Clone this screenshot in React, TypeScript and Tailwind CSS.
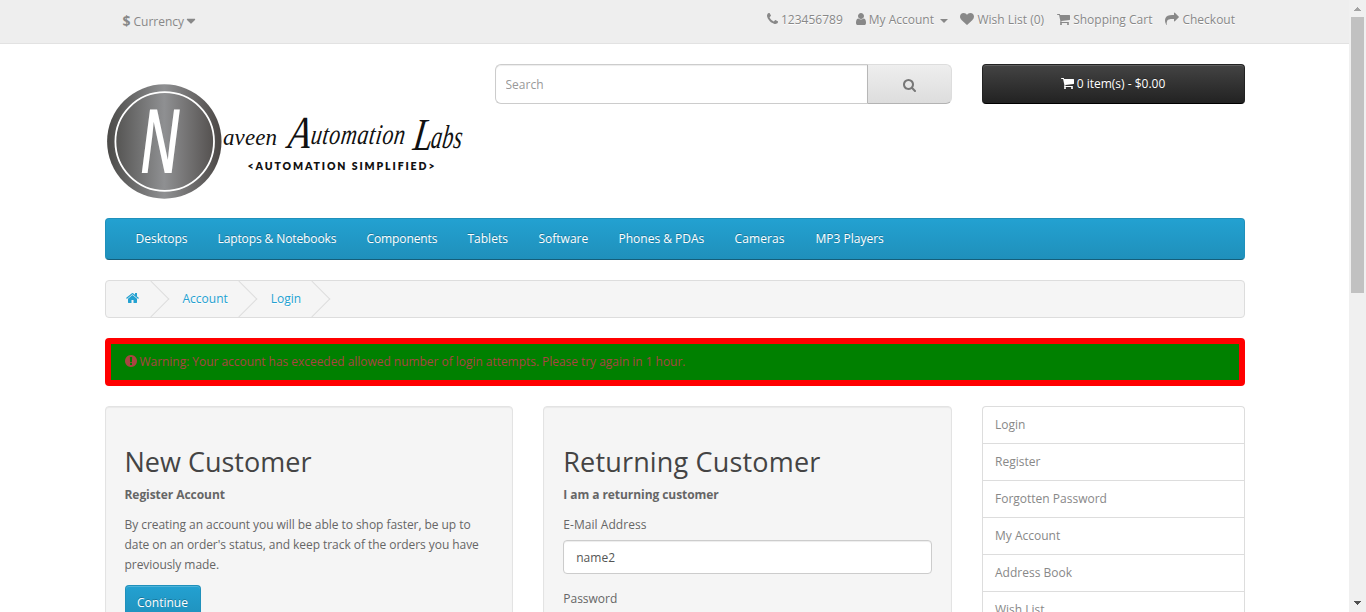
import React from 'react';

type IconProps = { x: number; w: number; d: string; className?: string };

const Icon = ({ x, w, d, className = '' }: IconProps) => (
  <svg
    viewBox={`${x} 0 ${w} 1792`}
    width={w / 128}
    height={14}
    fill="currentColor"
    className={`block shrink-0 ${className}`}
    aria-hidden="true"
  >
    <path d={d} />
  </svg>
);

const icons = {
  phone: { x: 192, w: 1408, d: 'M1600 1240q0 27-10 70.5t-21 68.5q-21 50-122 106-94 51-186 51-27 0-53-3.5t-57.5-12.5-47-14.5-55.5-20.5-49-18q-98-35-175-83-127-79-264-216t-216-264q-48-77-83-175-3-9-18-49t-20.5-55.5-14.5-47-12.5-57.5-3.5-53q0-92 51-186 56-101 106-122 25-11 68.5-21t70.5-10q14 0 21 3 18 6 53 76 11 19 30 54t35 63.5 31 53.5q3 4 17.5 25t21.5 35.5 7 28.5q0 20-28.5 50t-62 55-62 53-28.5 46q0 9 5 22.5t8.5 20.5 14 24 11.5 19q76 137 174 235t235 174q2 1 19 11.5t24 14 20.5 8.5 22.5 5q18 0 46-28.5t53-62 55-62 50-28.5q14 0 28.5 7t35.5 21.5 25 17.5q25 15 53.5 31t63.5 35 54 30q70 35 76 53 3 7 3 21z' },
  user: { x: 256, w: 1280, d: 'M1536 1399q0 109-62.5 187t-150.5 78h-854q-88 0-150.5-78t-62.5-187q0-85 8.5-160.5t31.5-152 58.5-131 94-89 134.5-34.5q131 128 313 128t313-128q76 0 134.5 34.5t94 89 58.5 131 31.5 152 8.5 160.5zm-256-887q0 159-112.5 271.5t-271.5 112.5-271.5-112.5-112.5-271.5 112.5-271.5 271.5-112.5 271.5 112.5 112.5 271.5z' },
  heart: { x: 0, w: 1792, d: 'M896 1664q-26 0-44-18l-624-602q-10-8-27.5-26t-55.5-65.5-68-97.5-53.5-121-23.5-138q0-220 127-344t351-124q62 0 126.5 21.5t120 58 95.5 68.5 76 68q36-36 76-68t95.5-68.5 120-58 126.5-21.5q224 0 351 124t127 344q0 221-229 450l-623 600q-18 18-44 18z' },
  cart: { x: 64, w: 1664, d: 'M704 1536q0 52-38 90t-90 38-90-38-38-90 38-90 90-38 90 38 38 90zm896 0q0 52-38 90t-90 38-90-38-38-90 38-90 90-38 90 38 38 90zm128-1088v512q0 24-16.5 42.5t-40.5 21.5l-1044 122q13 60 13 70 0 16-24 64h920q26 0 45 19t19 45-19 45-45 19h-1024q-26 0-45-19t-19-45q0-11 8-31.5t16-36 21.5-40 15.5-29.5l-177-823h-204q-26 0-45-19t-19-45 19-45 45-19h256q16 0 28.5 6.5t19.5 15.5 13 24.5 8 26 5.5 29.5 4.5 26h1201q26 0 45 19t19 45z' },
  share: { x: 0, w: 1792, d: 'M1792 640q0 26-19 45l-512 512q-19 19-45 19t-45-19-19-45v-256h-224q-98 0-175.5 6t-154 21.5-133 42.5-105.5 69.5-80 101-48.5 138.5-17.5 181q0 55 5 123 0 6 2.5 23.5t2.5 26.5q0 15-8.5 25t-23.5 10q-16 0-28-17-7-9-13-22t-13.5-30-10.5-24q-127-285-127-451 0-199 53-333 162-403 875-403h224v-256q0-26 19-45t45-19 45 19l512 512q19 19 19 45z' },
  search: { x: 64, w: 1664, d: 'M1216 832q0-185-131.5-316.5t-316.5-131.5-316.5 131.5-131.5 316.5 131.5 316.5 316.5 131.5 316.5-131.5 131.5-316.5zm512 832q0 52-38 90t-90 38q-54 0-90-38l-343-342q-179 124-399 124-143 0-273.5-55.5t-225-150-150-225-55.5-273.5 55.5-273.5 150-225 225-150 273.5-55.5 273.5 55.5 225 150 150 225 55.5 273.5q0 220-124 399l343 343q37 37 37 90z' },
  home: { x: 64, w: 1664, d: 'M1472 992v480q0 26-19 45t-45 19h-384v-384h-256v384h-384q-26 0-45-19t-19-45v-480q0-1 .5-3t.5-3l575-474 575 474q1 2 1 6zm223-69l-62 74q-8 9-21 11h-3q-13 0-21-7l-692-577-692 577q-12 8-24 7-13-2-21-11l-62-74q-8-10-7-23.5t11-21.5l719-599q32-26 76-26t76 26l244 204v-195q0-14 9-23t23-9h192q14 0 23 9t9 23v408l219 182q10 8 11 21.5t-7 23.5z' },
  warning: { x: 128, w: 1536, d: 'M896 128q209 0 385.5 103t279.5 279.5 103 385.5-103 385.5-279.5 279.5-385.5 103-385.5-103-279.5-279.5-103-385.5 103-385.5 279.5-279.5 385.5-103zm128 1247v-190q0-14-9-23.5t-22-9.5h-192q-13 0-23 10t-10 23v190q0 13 10 23t23 10h192q13 0 22-9.5t9-23.5zm-2-344l18-621q0-12-10-18-10-8-24-8h-220q-14 0-24 8-10 6-10 18l18 621q0 10 10 17.5t24 7.5h185q14 0 23.5-7.5t10.5-17.5z' },
  caret: { x: 384, w: 1024, d: 'M1408 704q0 26-19 45l-448 448q-19 19-45 19t-45-19l-448-448q-19-19-19-45t19-45 45-19h896q26 0 45 19t19 45z' },
};

const TopBar = () => (
  <nav className="h-11 border-b border-[#e2e2e2] bg-[#eeeeee] text-[#888888]">
    <div className="mx-auto flex w-[1140px] justify-between [text-shadow:0_1px_0_#fff]">
      <button className="ml-[18px] mt-[12px] flex h-5 items-center">
        <strong className="mt-[-3px] text-[14px]">$</strong>
        <span className="ml-[3px]">Currency</span>
        <Icon {...icons.caret} className="ml-[3px] mt-[-2px] scale-110" />
      </button>
      <ul className="mr-[9.5px] mt-[10px] flex h-5 items-center">
        <li className="flex items-center"><Icon {...icons.phone} className="mt-[-3px]" /><span className="ml-[3px]">123456789</span></li>
        <li className="ml-[13px] flex items-center">
          <Icon {...icons.user} className="mt-[-2px]" />
          <span className="ml-[3px]">My Account</span>
          <span className="ml-[6px] mt-[2px] h-0 w-0 border-x-4 border-t-4 border-x-transparent border-t-[#888888]" />
        </li>
        <li className="ml-[12.5px] flex items-center"><Icon {...icons.heart} className="mt-[-2px]" /><span className="ml-[3px]">Wish List (0)</span></li>
        <li className="ml-[13px] flex items-center"><Icon {...icons.cart} className="mt-[-2px]" /><span className="ml-[3px]">Shopping Cart</span></li>
        <li className="ml-[13px] flex items-center"><Icon {...icons.share} className="mt-[-2px]" /><span className="ml-[3px]">Checkout</span></li>
      </ul>
    </div>
  </nav>
);

const Logo = () => (
  <svg width="380" height="144" viewBox="0 0 380 144" className="block" role="img" aria-label="Naveen Automation Labs">
    <defs>
      <linearGradient id="disc" x1="0" x2="1" y1="0" y2="0">
        <stop offset="0" stopColor="#4b4a48" />
        <stop offset="0.5" stopColor="#8f9092" />
        <stop offset="1" stopColor="#4b4745" />
      </linearGradient>
    </defs>
    <circle cx="59.3" cy="77.5" r="57.2" fill="url(#disc)" />
    <circle cx="59.7" cy="77.5" r="49.3" fill="none" stroke="#fff" strokeWidth="1.8" />
    <text transform="translate(35 109) scale(.6 1)" fontFamily="'Open Sans', sans-serif" fontStyle="italic" fontSize="88" fontWeight="600" fill="#fff" textLength="66" lengthAdjust="spacingAndGlyphs">N</text>
    <g fontFamily="'Liberation Serif', serif" fontStyle="italic" fill="#111">
      <text x="118" y="81" fontSize="23" textLength="54" lengthAdjust="spacing">aveen</text>
      <text transform="translate(182 84) skewX(-8) scale(.8 1)" fontSize="46">A</text>
      <text transform="translate(205 80) skewX(-8) scale(1 1.3)" fontSize="22" textLength="94" lengthAdjust="spacing">utomation</text>
      <text transform="translate(307 86) skewX(-8) scale(.75 1)" fontSize="46">L</text>
      <text transform="translate(325 84) skewX(-8) scale(1 1.5)" fontSize="22" textLength="31" lengthAdjust="spacing">abs</text>
    </g>
    <text x="142.5" y="106.4" fontFamily="Lato, sans-serif" fontSize="10.5" fontWeight="800" fill="#111" textLength="187">&lt;AUTOMATION SIMPLIFIED&gt;</text>
  </svg>
);

const Header = () => (
  <header className="flex h-[154px]">
    <div className="w-[390px] shrink-0"><Logo /></div>
    <div className="flex h-10 w-[457.5px] shrink-0">
      <input
        className="h-10 w-[372.5px] rounded-l-[6px] border border-r-0 border-[#cccccc] bg-white px-[10px] shadow-[inset_0_1px_1px_rgba(0,0,0,0.075)] outline-none placeholder:text-[#999999]"
        placeholder="Search"
      />
      <button className="flex h-10 flex-1 items-center justify-center rounded-r-[6px] border border-[#dddddd] border-b-[#b3b3b3] border-l-[#b7b7b7] bg-gradient-to-b from-[#eeeeee] to-[#dddddd] text-[#777777]">
        <Icon {...icons.search} className="mt-px" />
      </button>
    </div>
    <button className="ml-[30px] flex h-10 w-[262.5px] shrink-0 items-center justify-center rounded-[4px] border border-[#222222] border-b-black bg-gradient-to-b from-[#444444] to-[#222222] text-white shadow-[inset_0_1px_0_rgba(255,255,255,0.15)] [text-shadow:0_-1px_0_rgba(0,0,0,0.25)]">
      <Icon {...icons.cart} className="mt-[-2px]" />
      <span className="ml-[2.5px]">0 item(s) - $0.00</span>
    </button>
  </header>
);

const categories = [
  { name: 'Desktops', cls: 'w-[82px]' },
  { name: 'Laptops & Notebooks', cls: 'w-[149px] tracking-[-0.11px]' },
  { name: 'Components', cls: 'w-[101px] tracking-[-0.1px]' },
  { name: 'Tablets', cls: 'w-[71px]' },
  { name: 'Software', cls: 'w-[80px]' },
  { name: 'Phones & PDAs', cls: 'w-[116px]' },
  { name: 'Cameras', cls: 'w-[81px] tracking-[0.1px]' },
  { name: 'MP3 Players', cls: 'w-[100px]' },
];

const Menu = () => (
  <nav className="flex h-[42px] items-center rounded-[4px] border border-[#1f90bb] border-b-[#145e7a] bg-gradient-to-b from-[#23a1d1] to-[#1f90bb] pl-[30px] text-white [text-shadow:0_-1px_0_rgba(0,0,0,0.25)]">
    {categories.map(({ name, cls }) => <a key={name} className={`whitespace-nowrap ${cls}`}>{name}</a>)}
  </nav>
);

const Chevron = () => (
  <span className="absolute -right-[5px] -top-[3px] h-[26px] w-[26px] -rotate-45 border-b border-r border-[#dddddd]" />
);

const Breadcrumb = () => (
  <ul className="mt-5 flex h-[38px] gap-[3.5px] overflow-hidden rounded-[4px] border border-[#dddddd] bg-[#f5f5f5] py-2 text-[#23a1d1] [text-shadow:0_1px_0_#fff]">
    <li className="relative px-5"><Icon {...icons.home} className="mt-[2px]" /><Chevron /></li>
    <li className="relative pl-[20.5px] pr-[19.5px]">Account<Chevron /></li>
    <li className="relative pl-5 pr-[19px]">Login<Chevron /></li>
  </ul>
);

const links = ['Login', 'Register', 'Forgotten Password', 'My Account', 'Address Book', 'Wish List'];

const Content = () => (
  <div className="mt-5 flex gap-[30px]">
    <section className="h-[300px] w-[408.75px] rounded-[4px] border border-[#e3e3e3] bg-[#f5f5f5] p-[19px] shadow-[inset_0_1px_1px_rgba(0,0,0,0.05)]">
      <h2 className="mb-[8px] mt-[21px] text-[27px] leading-[30px] text-[#444444]">New Customer</h2>
      <p className="mb-[10px] font-bold tracking-[-0.06px]">Register Account</p>
      <p className="mb-[10px] tracking-[-0.055px]">By creating an account you will be able to shop faster, be up to date on an order's status, and keep track of the orders you have previously made.</p>
      <button className="h-[36px] w-[76px] rounded-[4px] border border-[#1f90bb] border-b-[#145e7a] bg-gradient-to-b from-[#23a1d1] to-[#1f90bb] text-white shadow-[inset_0_1px_0_rgba(255,255,255,0.2)] [text-shadow:0_-1px_0_rgba(0,0,0,0.25)]">Continue</button>
    </section>
    <section className="h-[300px] w-[408.75px] rounded-[4px] border border-[#e3e3e3] bg-[#f5f5f5] p-[19px] shadow-[inset_0_1px_1px_rgba(0,0,0,0.05)]">
      <h2 className="mb-[8px] mt-[21px] text-[27px] leading-[30px] tracking-[0.17px] text-[#444444]">Returning Customer</h2>
      <p className="mb-[10px] font-bold tracking-[-0.06px]">I am a returning customer</p>
      <label className="mb-[5px] block tracking-[0.05px]">E-Mail Address</label>
      <input
        defaultValue="name2"
        className="mb-[15px] block h-[34px] w-full rounded-[4px] border border-[#cccccc] bg-white px-3 text-[#555555] shadow-[inset_0_1px_1px_rgba(0,0,0,0.075)] outline-none"
      />
      <label className="block">Password</label>
    </section>
    <aside className="w-[262.5px]">
      {links.map((name) => (
        <a key={name} className="block h-[37px] border-x border-t border-[#dddddd] px-3 py-2 text-[#888888] first:rounded-t-[4px]">{name}</a>
      ))}
    </aside>
  </div>
);

const Scrollbar = () => (
  <div className="flex h-full w-[17px] shrink-0 flex-col items-center bg-[#f0f0f0]">
    <svg width="17" height="17" className="block shrink-0" shapeRendering="crispEdges"><path d="M8 7h1v1h1v1h1v1h1v1H5v-1h1V9h1V8h1z" fill="#a3a3a3" /></svg>
    <div className="h-[276px] w-[13px] shrink-0 bg-[#c1c1c1]" />
    <svg width="17" height="17" className="mt-auto block shrink-0" shapeRendering="crispEdges"><path d="M5 6h7v1h-1v1h-1v1H9v1H8V9H7V8H6V7H5z" fill="#505050" /></svg>
  </div>
);

export default function App() {
  return (
    <div className="flex h-[612px] w-[1366px] overflow-hidden bg-white font-['Open_Sans',sans-serif] text-[12px] leading-5 text-[#666666]">
      <div className="h-full w-[1349px] shrink-0 overflow-hidden">
        <TopBar />
        <main className="mx-auto mt-5 w-[1140px]">
          <Header />
          <Menu />
          <Breadcrumb />
          <div className="mt-5 flex h-12 items-center rounded-[4px] border-[6px] border-[#ff0000] bg-[#008000] pl-[14px] text-[#a94442]">
            <Icon {...icons.warning} className="mt-[-2px]" />
            <span className="ml-[3px] tracking-[-0.04px]">Warning: Your account has exceeded allowed number of login attempts. Please try again in 1 hour.</span>
          </div>
          <Content />
        </main>
      </div>
      <Scrollbar />
    </div>
  );
}
